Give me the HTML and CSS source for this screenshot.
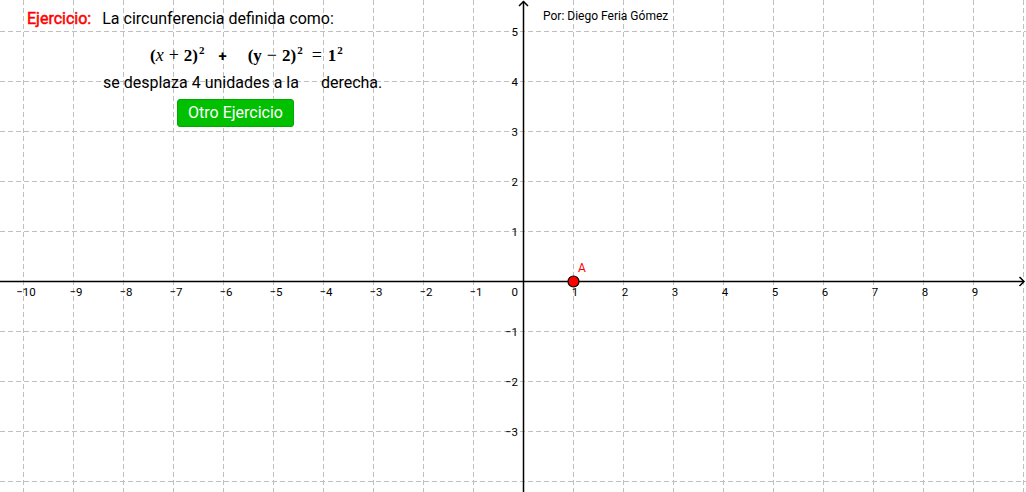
FILE: index.html
```html
<!DOCTYPE html>
<html lang="es">
<head>
<meta charset="utf-8">
<title>Ejercicio</title>
<link rel="stylesheet" href="styles.css">
</head>
<body>
<div class="stage">
  <svg class="graph" width="1026" height="492" viewBox="0 0 1026 492" xmlns="http://www.w3.org/2000/svg">
    <g class="grid" stroke="#c0c0c0" stroke-width="1" stroke-dasharray="5,3" fill="none">
      <path d="M23.5 0V492M73.5 0V492M123.5 0V492M173.5 0V492M223.5 0V492M273.5 0V492M323.5 0V492M373.5 0V492M423.5 0V492M473.5 0V492M573.5 0V492M623.5 0V492M673.5 0V492M723.5 0V492M773.5 0V492M823.5 0V492M873.5 0V492M923.5 0V492M973.5 0V492M1023.5 0V492"/>
      <path d="M0 31.5H1026M0 81.5H1026M0 131.5H1026M0 181.5H1026M0 231.5H1026M0 331.5H1026M0 381.5H1026M0 431.5H1026M0 481.5H1026"/>
    </g>
    <g stroke="#000" stroke-width="1.5" fill="none">
      <path d="M0 281.5H1024"/>
      <path d="M1019.5 277L1024 281.5L1019.5 286"/>
      <path d="M523.5 1.5V492"/>
      <path d="M519 6L523.5 1.5L528 6"/>
    </g>
    <g class="ticks" fill="#000" font-size="11.5" text-anchor="middle">
      <text x="26" y="296">−10</text>
      <text x="76" y="296">−9</text>
      <text x="126" y="296">−8</text>
      <text x="176" y="296">−7</text>
      <text x="226" y="296">−6</text>
      <text x="276" y="296">−5</text>
      <text x="326" y="296">−4</text>
      <text x="376" y="296">−3</text>
      <text x="426" y="296">−2</text>
      <text x="476" y="296">−1</text>
      <text x="575" y="296">1</text>
      <text x="625" y="296">2</text>
      <text x="675" y="296">3</text>
      <text x="725" y="296">4</text>
      <text x="775" y="296">5</text>
      <text x="825" y="296">6</text>
      <text x="875" y="296">7</text>
      <text x="925" y="296">8</text>
      <text x="975" y="296">9</text>
    </g>
    <g class="ticks" fill="#000" font-size="11.5" text-anchor="end">
      <text x="518" y="296">0</text>
      <text x="518" y="35.5">5</text>
      <text x="518" y="85.5">4</text>
      <text x="518" y="135.5">3</text>
      <text x="518" y="185.5">2</text>
      <text x="518" y="235.5">1</text>
      <text x="518" y="335.5">−1</text>
      <text x="518" y="385.5">−2</text>
      <text x="518" y="435.5">−3</text>
    </g>
    <circle cx="573.5" cy="281.5" r="5.5" fill="#ff0000" stroke="#000" stroke-width="1.2"/>
    <text class="ticks" x="578" y="272" fill="#ff0000" font-size="12">A</text>
  </svg>

  <div class="line1">
    <span class="label-red">Ejercicio:</span>
    <span class="intro">La circunferencia definida como:</span>
  </div>

  <div class="equation">
    <span class="eq-part">(<i>x</i><span class="op">+</span>2)<sup>2</sup></span>
    <span class="eq-plus">+</span>
    <span class="eq-part">(y<span class="op">−</span>2)<sup>2</sup></span>
    <span class="eq-eq"><span class="op">=</span>1<sup>2</sup></span>
  </div>

  <div class="line2">
    <span>se desplaza 4 unidades a la</span>
    <span class="dir">derecha.</span>
  </div>

  <button class="btn">Otro Ejercicio</button>

  <div class="author">Por: Diego Feria Gómez</div>
</div>
</body>
</html>
```

FILE: styles.css
```css
html, body {
  margin: 0;
  padding: 0;
  background: #ffffff;
}

body {
  font-family: Roboto, "Liberation Sans", sans-serif;
  color: #000;
}

.stage {
  position: relative;
  width: 1026px;
  height: 492px;
  overflow: hidden;
  background: #fff;
}

.graph {
  position: absolute;
  left: 0;
  top: 0;
}

.ticks {
  font-family: Roboto, "Liberation Sans", sans-serif;
}

.line1 {
  position: absolute;
  left: 27px;
  top: 8px;
  display: flex;
  gap: 11px;
  font-size: 16px;
  line-height: 22px;
  white-space: nowrap;
}

.label-red {
  color: #ff0000;
  -webkit-text-stroke: 0.5px #ff0000;
}

.equation {
  position: absolute;
  left: 150px;
  top: 44px;
  display: flex;
  align-items: baseline;
  font-family: "Liberation Serif", "DejaVu Serif", serif;
  font-weight: bold;
  font-size: 17px;
  line-height: 22px;
  white-space: nowrap;
}

.equation sup {
  font-size: 11px;
  line-height: 0;
  vertical-align: 7px;
  margin-left: 1px;
}

.equation i {
  font-weight: normal;
  font-size: 18px;
}

.op {
  font-weight: normal;
  margin: 0 5px;
  font-size: 18px;
}

.eq-plus {
  margin-left: 14px;
  margin-right: 21px;
  font-family: Roboto, "Liberation Sans", sans-serif;
  font-size: 15px;
}

.eq-eq {
  margin-left: 4px;
}

.eq-eq .op {
  margin-right: 6px;
}

.line2 {
  position: absolute;
  left: 103px;
  top: 72px;
  display: flex;
  gap: 22px;
  font-size: 16px;
  line-height: 22px;
  white-space: nowrap;
}

.btn {
  position: absolute;
  left: 177px;
  top: 99px;
  width: 117px;
  height: 28px;
  padding: 0;
  margin: 0;
  background: #00c000;
  border: 1px solid #00a800;
  border-radius: 3px;
  color: #fff;
  font-family: Roboto, "Liberation Sans", sans-serif;
  font-size: 16px;
  line-height: 26px;
  text-align: center;
}

.author {
  position: absolute;
  left: 543px;
  top: 8px;
  font-size: 12px;
  line-height: 16px;
  white-space: nowrap;
}
```
